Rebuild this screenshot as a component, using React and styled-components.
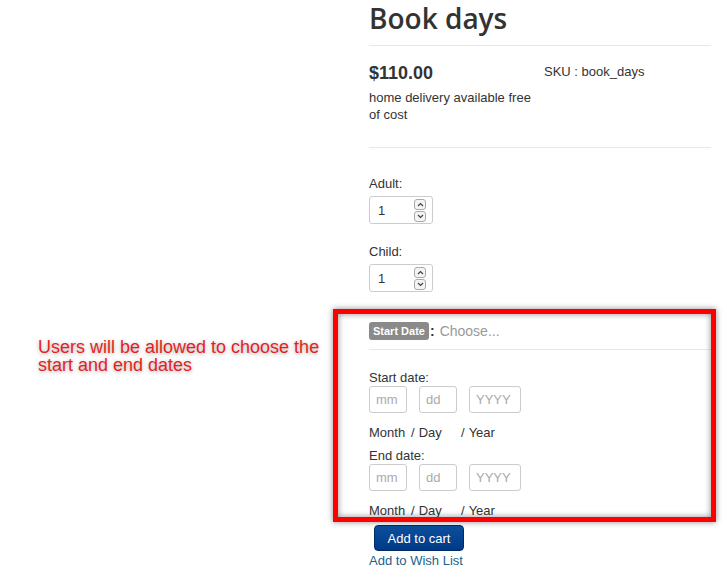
import React from "react";
import styled, { createGlobalStyle } from "styled-components";

const GlobalStyle = createGlobalStyle`
  html, body {
    margin: 0;
    padding: 0;
    background: #fff;
  }
  body {
    font-family: "Liberation Sans", Arial, sans-serif;
    font-size: 13px;
    color: #333;
  }
`;

const Page = styled.div`
  position: relative;
  width: 727px;
  height: 582px;
  overflow: hidden;
`;

const Column = styled.div`
  margin-left: 369px;
  width: 342px;
  padding-top: 1px;
  display: flex;
  flex-direction: column;
`;

const Title = styled.h1`
  margin: 0;
  font-family: "Open Sans", sans-serif;
  font-weight: 600;
  font-size: 28px;
  line-height: 34px;
  color: #333;
`;

const Rule = styled.div`
  height: 1px;
  background: #e8e8e8;
  margin-top: ${(p) => p.top}px;
`;

const PriceRow = styled.div`
  display: flex;
  margin-top: 17px;
`;

const PriceCol = styled.div`
  width: 175px;
`;

const Price = styled.div`
  font-weight: bold;
  font-size: 18px;
  line-height: 20px;
`;

const Note = styled.div`
  margin-top: 6px;
  line-height: 17px;
`;

const Sku = styled.div`
  line-height: 17px;
`;

const Label = styled.div`
  line-height: 17px;
  margin-top: ${(p) => p.top || 0}px;
`;

const NumberBox = styled.div`
  box-sizing: border-box;
  width: 64px;
  height: 28px;
  margin-top: 4px;
  border: 1px solid #ccc;
  border-radius: 3px;
  display: flex;
  align-items: center;
  justify-content: space-between;
  padding: 0 6px 0 8px;
`;

const Spinner = styled.div`
  display: flex;
  flex-direction: column;
  gap: 1px;
`;

const SpinBtn = styled.div`
  box-sizing: border-box;
  width: 12px;
  height: 11px;
  border: 1px solid #aaa;
  border-radius: 3px;
  display: flex;
  align-items: center;
  justify-content: center;
  background: #f4f4f4;
`;

const Arrow = ({ down }) => (
  <svg width="7" height="5" viewBox="0 0 7 5">
    <path
      d={down ? "M1 1 L3.5 3.5 L6 1" : "M1 4 L3.5 1.5 L6 4"}
      fill="none"
      stroke="#444"
      strokeWidth="1.2"
    />
  </svg>
);

const QtyInput = ({ value }) => (
  <NumberBox>
    <span>{value}</span>
    <Spinner>
      <SpinBtn>
        <Arrow />
      </SpinBtn>
      <SpinBtn>
        <Arrow down />
      </SpinBtn>
    </Spinner>
  </NumberBox>
);

const ChooseRow = styled.div`
  display: flex;
  align-items: center;
  height: 20px;
  margin-top: 29px;
  font-size: 14px;
`;

const Badge = styled.span`
  background: #8a8a8a;
  color: #fff;
  font-size: 11px;
  font-weight: bold;
  line-height: 18px;
  padding: 0 4px;
  border-radius: 3px;
`;

const Colon = styled.span`
  color: #333;
  font-weight: bold;
  margin: 0 5px 0 1px;
`;

const Choose = styled.span`
  color: #999;
`;

const DateRow = styled.div`
  display: flex;
  gap: 12px;
`;

const DateInput = styled.div`
  box-sizing: border-box;
  width: ${(p) => p.w}px;
  height: 27px;
  border: 1px solid #ccc;
  border-radius: 3px;
  color: #aaa;
  display: flex;
  align-items: center;
  padding-left: 6px;
`;

const Parts = styled.div`
  display: flex;
  line-height: 17px;
  margin-top: 11px;
`;

const Part = styled.div`
  width: ${(p) => p.w}px;
`;

const Slash = styled.span`
  margin-right: 4px;
`;

const DateFields = () => (
  <>
    <DateRow>
      <DateInput w={38}>mm</DateInput>
      <DateInput w={38}>dd</DateInput>
      <DateInput w={52}>YYYY</DateInput>
    </DateRow>
    <Parts>
      <Part w={42}>Month</Part>
      <Part w={50}>
        <Slash>/</Slash>Day
      </Part>
      <Part w={60}>
        <Slash>/</Slash>Year
      </Part>
    </Parts>
  </>
);

const CartButton = styled.button`
  align-self: flex-start;
  margin: 6px 0 0 5px;
  width: 90px;
  height: 26px;
  border: 1px solid #002a66;
  border-radius: 4px;
  background: linear-gradient(#0c4f9e, #003a86);
  color: #fff;
  font-family: "Liberation Sans", Arial, sans-serif;
  font-size: 13px;
  padding: 0;
`;

const WishLink = styled.a`
  color: #21628f;
  line-height: 17px;
  margin-top: 1px;
  text-decoration: none;
`;

const Callout = styled.div`
  position: absolute;
  left: 38px;
  top: 338px;
  width: 300px;
  color: #e61e1e;
  font-size: 18px;
  line-height: 18px;
  text-shadow: 0 1px 4px rgba(0, 0, 0, 0.35);
`;

const Frame = styled.div`
  position: absolute;
  left: 333px;
  top: 309px;
  width: 383px;
  height: 213px;
  box-sizing: border-box;
  border: 5px solid #f00;
  box-shadow: 0 0 6px rgba(0, 0, 0, 0.45),
    inset 0 0 6px rgba(0, 0, 0, 0.45);
  pointer-events: none;
`;

export default function App() {
  return (
    <Page>
      <GlobalStyle />
      <Column>
        <Title>Book days</Title>
        <Rule top={10} />
        <PriceRow>
          <PriceCol>
            <Price>$110.00</Price>
            <Note>
              home delivery available free
              <br />
              of cost
            </Note>
          </PriceCol>
          <Sku>SKU : book_days</Sku>
        </PriceRow>
        <Rule top={24} />
        <Label top={27}>Adult:</Label>
        <QtyInput value="1" />
        <Label top={19}>Child:</Label>
        <QtyInput value="1" />
        <ChooseRow>
          <Badge>Start Date</Badge>
          <Colon>:</Colon>
          <Choose>Choose...</Choose>
        </ChooseRow>
        <Rule top={8} />
        <Label top={19}>Start date:</Label>
        <DateFields />
        <Label top={6}>End date:</Label>
        <DateFields />
        <CartButton>Add to cart</CartButton>
        <WishLink href="#">Add to Wish List</WishLink>
      </Column>
      <Callout>Users will be allowed to choose the start and end dates</Callout>
      <Frame />
    </Page>
  );
}
